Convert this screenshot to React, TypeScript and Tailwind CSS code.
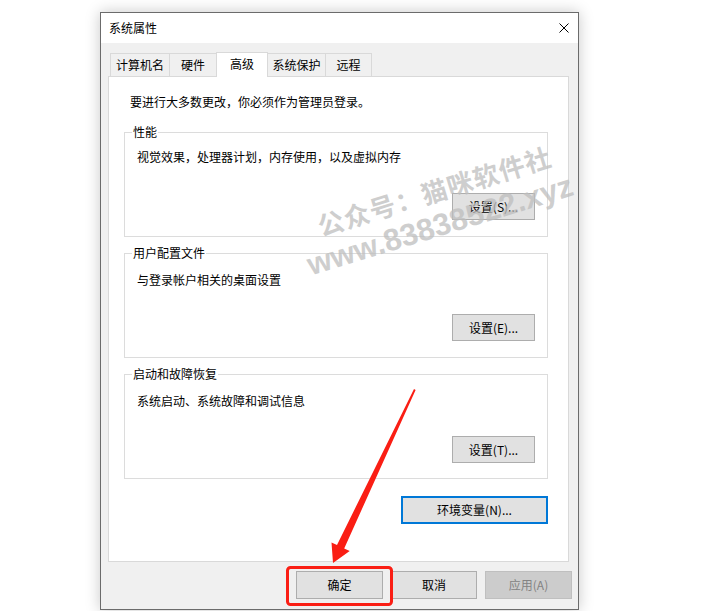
import React from "react";

function Btn({ label, className = "" }: { label: string; className?: string }) {
  return (
    <div
      className={`flex items-center justify-center bg-[#e1e1e1] border border-[#adadad] text-[12px] leading-[16px] text-black ${className}`}
    >
      {label}
    </div>
  );
}

function Group({
  title,
  text,
  btn,
  textMt,
  gap,
  className = "",
}: {
  title: string;
  text: string;
  btn: string;
  textMt: string;
  gap: string;
  className?: string;
}) {
  return (
    <fieldset className={`border border-[#dcdcdc] px-[7px] h-[113px] ${className}`}>
      <legend className="px-[1px] text-[12px] leading-[16px]">{title}</legend>
      <div className="pl-[5px] pr-[5px]">
        <div className={`${textMt} text-[12px] leading-[16px]`}>{text}</div>
        <div className={`flex justify-end ${gap}`}>
          <Btn label={btn} className="w-[83px] h-[27px]" />
        </div>
      </div>
    </fieldset>
  );
}

export default function App() {
  return (
    <div className="relative w-[702px] h-[611px] bg-white overflow-hidden pl-[100px] pt-[12px] font-['Noto_Sans_CJK_SC','Microsoft_YaHei',sans-serif] text-black">
      <div className="w-[479px] h-[598px] border border-[#6b6b6b] bg-[#f0f0f0] flex flex-col shadow-[0_0_14px_rgba(0,0,0,0.22)]">
        {/* title bar */}
        <div className="h-[30px] bg-white flex items-center justify-between pl-[8px] pr-[9px]">
          <span className="text-[12px] leading-[16px]">系统属性</span>
          <svg width="10" height="10" viewBox="0 0 10 10">
            <path d="M0.5 0.5 L9.5 9.5 M9.5 0.5 L0.5 9.5" stroke="#000" strokeWidth="1" fill="none" />
          </svg>
        </div>
        {/* body */}
        <div className="flex-1 pt-[9px] pl-[7px] pr-[9px] flex flex-col">
          <div className="flex items-end h-[24px] pl-[2px] text-[12px] leading-[16px]">
            <div className="w-[60px] h-[23px] border-l border-t border-r border-[#d9d9d9] flex items-center justify-center">计算机名</div>
            <div className="w-[46px] h-[23px] border-t border-[#d9d9d9] flex items-center justify-center">硬件</div>
            <div className="relative z-10 -mb-px w-[52px] h-[25px] border-l border-t border-r border-[#d9d9d9] bg-white flex items-center justify-center pb-[2px]">高级</div>
            <div className="w-[58px] h-[23px] border-t border-r border-[#d9d9d9] flex items-center justify-center">系统保护</div>
            <div className="w-[46px] h-[23px] border-t border-r border-[#d9d9d9] flex items-center justify-center">远程</div>
          </div>
          <div className="h-[486px] border border-[#d9d9d9] bg-white pl-[15px] pr-[20px] pt-[17px]">
            <div className="pl-[6px] text-[12px] leading-[16px]">要进行大多数更改，你必须作为管理员登录。</div>
            <Group
              className="mt-[14px]"
              title="性能"
              text="视觉效果，处理器计划，内存使用，以及虚拟内存"
              btn="设置(S)..."
              textMt="mt-[9px]"
              gap="mt-[28px]"
            />
            <Group
              className="mt-[8px]"
              title="用户配置文件"
              text="与登录帐户相关的桌面设置"
              btn="设置(E)..."
              textMt="mt-[11px]"
              gap="mt-[26px]"
            />
            <Group
              className="mt-[8px]"
              title="启动和故障恢复"
              text="系统启动、系统故障和调试信息"
              btn="设置(T)..."
              textMt="mt-[11px]"
              gap="mt-[27px]"
            />
            <div className="flex justify-end mt-[17px]">
              <div className="w-[147px] h-[28px] border-2 border-[#0078d7] bg-[#e1e1e1] flex items-center justify-center text-[12px] leading-[16px]">
                环境变量(N)...
              </div>
            </div>
          </div>
          <div className="mt-[9px] mr-[-3px] flex justify-end gap-[8px]">
            <Btn label="确定" className="w-[87px] h-[28px]" />
            <Btn label="取消" className="w-[86px] h-[28px]" />
            <div className="w-[87px] h-[28px] bg-[#cccccc] border border-[#bfbfbf] flex items-center justify-center text-[12px] leading-[16px] text-[#838383]">
              应用(A)
            </div>
          </div>
        </div>
      </div>

      {/* watermark */}
      <div className="absolute left-[318px] top-[212px] origin-[0_50%] rotate-[-17deg] whitespace-nowrap text-[26px] leading-[28px] font-bold tracking-[1px] text-[rgba(190,190,190,0.75)] pointer-events-none">
        公众号：猫咪软件社
      </div>
      <div className="absolute left-[308px] top-[250px] origin-[0_50%] rotate-[-17deg] whitespace-nowrap text-[31px] leading-[32px] font-bold font-['Liberation_Sans',sans-serif] text-[rgba(190,190,190,0.75)] pointer-events-none">
        www.83838522.xyz
      </div>

      {/* red arrow and box */}
      <svg className="absolute left-0 top-0 pointer-events-none" width="702" height="611" viewBox="0 0 702 611">
        <polygon
          points="414,389 415.6,390 344.2,548.4 349.7,551 333,563 331.5,542.5 337,545"
          fill="#fa1e14"
        />
        <rect x="287.5" y="567.5" width="104" height="37" rx="3" fill="none" stroke="#fa1e14" strokeWidth="3" />
      </svg>
    </div>
  );
}
